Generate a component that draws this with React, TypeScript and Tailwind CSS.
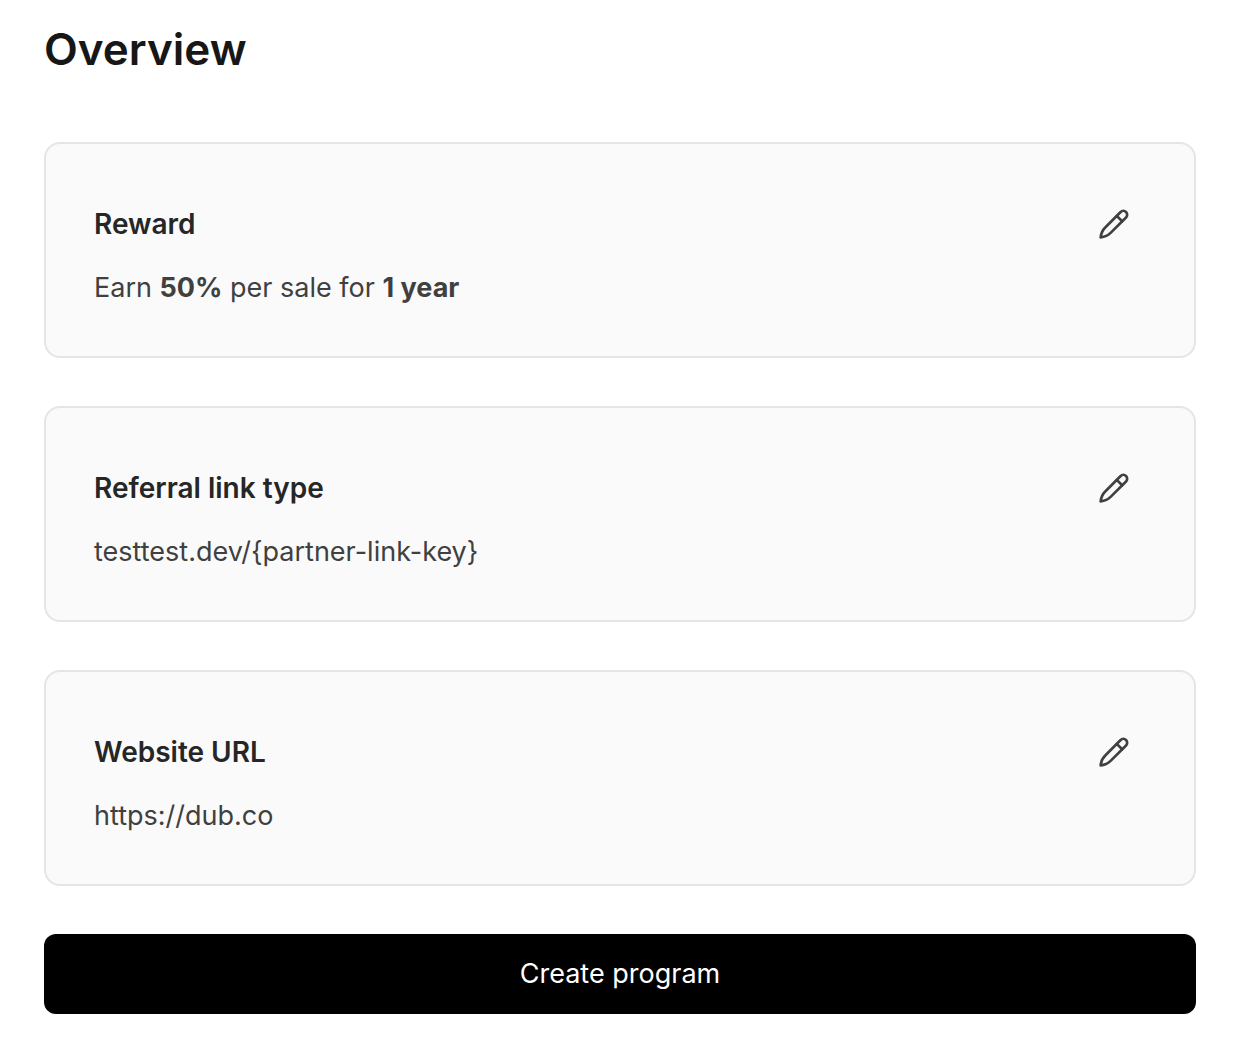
const cards = [
  {
    title: 'Reward',
    body: (
      <>
        Earn <strong className="font-bold">50%</strong> per sale for{' '}
        <strong className="font-bold">1 year</strong>
      </>
    ),
  },
  { title: 'Referral link type', body: 'testtest.dev/{partner-link-key}' },
  { title: 'Website URL', body: 'https://dub.co' },
]

function PencilIcon() {
  return (
    <svg
      aria-hidden="true"
      className="size-8"
      fill="none"
      stroke="currentColor"
      strokeLinecap="round"
      strokeLinejoin="round"
      strokeWidth="1.5"
      viewBox="0 0 18 18"
    >
      <path d="M10.547 4.422L13.578 7.453" />
      <path d="M15.773 5.311L7.23 13.85C5.7 15.4 3.6 16.3 1.5 16.5C1.7 14.4 2.6 12.35 4.2 10.82L12.742 2.28C13.579 1.443 14.936 1.443 15.773 2.28C16.61 3.117 16.61 4.474 15.773 5.311Z" />
    </svg>
  )
}

export default function App() {
  return (
    <main className="bg-white px-11 pb-11 pr-12 pt-6 font-['Inter',sans-serif] text-neutral-700">
      <h1 className="text-[44px] font-semibold leading-[50px] text-neutral-900">
        Overview
      </h1>

      <div className="mt-17 flex flex-col gap-12">
        {cards.map((card) => (
          <section
            className="rounded-2xl border-2 border-neutral-200 bg-neutral-50 p-12"
            key={card.title}
          >
            <div className="flex h-16 items-center justify-between">
              <h2 className="text-[28px] font-semibold leading-10 text-neutral-800">
                {card.title}
              </h2>
              <button
                aria-label={`Edit ${card.title}`}
                className="flex size-16 items-center justify-center rounded-lg text-neutral-700"
                type="button"
              >
                <PencilIcon />
              </button>
            </div>
            <p className="mt-3 text-[27px] leading-10">{card.body}</p>
          </section>
        ))}

        <button
          className="h-20 w-full rounded-xl bg-black text-[27px] leading-10 text-white"
          type="button"
        >
          Create program
        </button>
      </div>
    </main>
  )
}
